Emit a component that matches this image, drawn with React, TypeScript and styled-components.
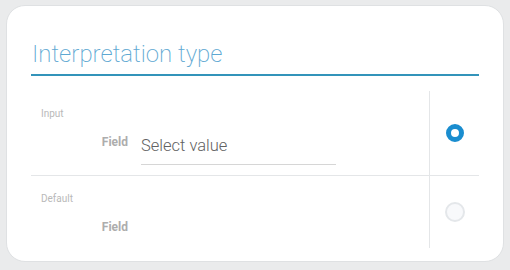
import styled, { createGlobalStyle } from 'styled-components';

const GlobalStyle = createGlobalStyle`
    html, body {
        margin: 0;
        padding: 0;
        background: #eaebec;
        font-family: Roboto, "Liberation Sans", sans-serif;
    }
`;

const rows = [
    { label: "Input", value: "Select value", checked: true },
    { label: "Default", value: null, checked: false },
];

function App() {
    return (
        <Page>
            <GlobalStyle />
            <Card>
                <Title>Interpretation type</Title>
                <List>
                    {rows.map((row, i) => (
                        <Row key={row.label} $last={i === rows.length - 1}>
                            <Body>
                                <Label>{row.label}</Label>
                                <FieldRow>
                                    <FieldName>Field</FieldName>
                                    {row.value && <Select>{row.value}</Select>}
                                </FieldRow>
                            </Body>
                            <Side>
                                <Radio $checked={row.checked} />
                            </Side>
                        </Row>
                    ))}
                </List>
            </Card>
        </Page>
    );
}

const Page = styled.div`
    padding: 5px 6px;
    width: 510px;
    height: 270px;
    box-sizing: border-box;
`;

const Card = styled.div`
    width: 498px;
    height: 257px;
    box-sizing: border-box;
    background: #fff;
    border: 1px solid #dfe1e3;
    border-radius: 19px;
    padding: 34px 24px 0 24px;
`;

const Title = styled.div`
    font-weight: 200;
    font-size: 24px;
    line-height: 28px;
    color: #5ea8d2;
    padding: 0 0 6px 1px;
    border-bottom: 2px solid #3394ba;
`;

const List = styled.div`
    margin-top: 15px;
`;

const Row = styled.div<{ $last: boolean }>`
    display: flex;
    border-bottom: ${({ $last }) => ($last ? 'none' : '1px solid #e4e6e8')};
`;

const Body = styled.div`
    flex: 1;
    padding: 16px 0 10px 10px;
`;

const Label = styled.div`
    font-size: 10px;
    line-height: 14px;
    color: #b9b9b9;
`;

const FieldRow = styled.div`
    display: flex;
    align-items: flex-start;
    gap: 13px;
    margin-top: 11px;
    min-height: 21px;
`;

const FieldName = styled.div`
    width: 87px;
    text-align: right;
    font-size: 12px;
    font-weight: 700;
    line-height: 14px;
    padding-top: 3px;
    color: #adadad;
`;

const Select = styled.div`
    width: 195px;
    font-size: 16.5px;
    font-weight: 300;
    line-height: 20px;
    color: #626262;
    padding: 4px 0 8px 0;
    border-bottom: 1px solid #d6d6d6;
`;

const Side = styled.div`
    width: 49px;
    border-left: 1px solid #e4e6e8;
    display: flex;
    align-items: center;
    justify-content: center;
`;

const Radio = styled.div<{ $checked: boolean }>`
    box-sizing: border-box;
    width: ${({ $checked }) => ($checked ? '18px' : '20px')};
    height: ${({ $checked }) => ($checked ? '18px' : '20px')};
    border-radius: 50%;
    background: ${({ $checked }) => ($checked ? '#fff' : '#f8f9fb')};
    border: ${({ $checked }) => ($checked ? '5px solid #1a8dcf' : '2px solid #e4e7ea')};
`;

export default App;
